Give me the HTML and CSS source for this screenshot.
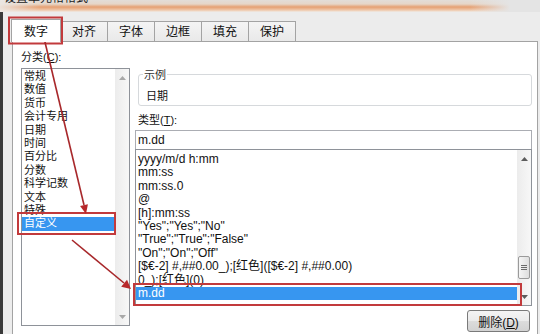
FILE: index.html
```html
<!DOCTYPE html>
<html lang="zh-CN">
<head>
  <meta charset="UTF-8">
  <title>设置单元格格式</title>
  <link rel="stylesheet" href="styles.css">
</head>
<body>

  <div class="dialog">
    <div class="titlebar"><span class="title">设置单元格格式</span></div>

    <div class="tabs">
      <div class="tab active">数字</div>
      <div class="tab">对齐</div>
      <div class="tab">字体</div>
      <div class="tab">边框</div>
      <div class="tab">填充</div>
      <div class="tab">保护</div>
    </div>

    <div class="panel">
      <div class="cat-col">
        <div class="field-label">分类(<u>C</u>):</div>
        <div class="listbox cat-list">
          <ul class="items">
            <li>常规</li>
            <li>数值</li>
            <li>货币</li>
            <li>会计专用</li>
            <li>日期</li>
            <li>时间</li>
            <li>百分比</li>
            <li>分数</li>
            <li>科学记数</li>
            <li>文本</li>
            <li>特殊</li>
            <li class="selected">自定义</li>
          </ul>
          <div class="vscroll disabled">
            <div class="arrow"><svg width="7" height="4" viewBox="0 0 7 4"><polygon points="0,4 3.5,0 7,4"/></svg></div>
            <div class="track"></div>
            <div class="arrow"><svg width="7" height="4" viewBox="0 0 7 4"><polygon points="0,0 3.5,4 7,0"/></svg></div>
          </div>
        </div>
      </div>

      <div class="type-col">
        <div class="sample">
          <div class="legend">示例</div>
          <div class="sample-value">日期</div>
        </div>
        <div class="field-label type-label">类型(<u>T</u>):</div>
        <div class="type-input">m.dd</div>
        <div class="listbox type-list">
          <ul class="items">
            <li>yyyy/m/d h:mm</li>
            <li>mm:ss</li>
            <li>mm:ss.0</li>
            <li>@</li>
            <li>[h]:mm:ss</li>
            <li>"Yes";"Yes";"No"</li>
            <li>"True";"True";"False"</li>
            <li>"On";"On";"Off"</li>
            <li>[$€-2] #,##0.00_);[红色]([$€-2] #,##0.00)</li>
            <li>0_);[红色](0)</li>
            <li class="selected">m.dd</li>
          </ul>
          <div class="vscroll">
            <div class="arrow"><svg width="7" height="4" viewBox="0 0 7 4"><polygon points="0,4 3.5,0 7,4"/></svg></div>
            <div class="track">
              <div class="thumb"><span></span><span></span><span></span></div>
            </div>
            <div class="arrow"><svg width="7" height="4" viewBox="0 0 7 4"><polygon points="0,0 3.5,4 7,0"/></svg></div>
          </div>
        </div>
        <button class="btn">删除(<u>D</u>)</button>
      </div>
    </div>

    <!-- 标注：红框和箭头 -->
    <svg class="notes" width="540" height="334" viewBox="0 0 540 334">
      <g fill="none" stroke="#c23a3c" stroke-width="2">
        <rect x="9" y="17.5" width="53" height="26"/>
        <rect x="18" y="213" width="97" height="21"/>
        <rect x="134" y="284" width="387" height="21"/>
      </g>
      <g stroke="#a8282b" stroke-width="1.6" fill="#b8282b">
        <line x1="44" y1="38" x2="84" y2="205"/>
        <polygon points="86,214 87.9,204.3 80.1,206.1" stroke="none"/>
        <line x1="72" y1="240" x2="124" y2="283"/>
        <polygon points="131,289 127,279.8 121.2,286.7" stroke="none"/>
      </g>
    </svg>
  </div>

</body>
</html>
```

FILE: styles.css
```css
* {
  box-sizing: border-box;
}

body {
  margin: 0;
  width: 540px;
  height: 334px;
  overflow: hidden;
  font-family: "Liberation Sans", "Noto Sans CJK SC", sans-serif;
  font-size: 12px;
  color: #111;
  background: linear-gradient(to right, #3a3a3a 0, #3a3a3a 3px, #ececec 3px);
}

.dialog {
  position: relative;
  width: 540px;
  height: 334px;
  overflow: hidden;
}

.titlebar {
  height: 12px;
  overflow: hidden;
  padding-left: 4px;
  background:
    linear-gradient(to right, rgba(236,232,228,0.9) 0, rgba(236,232,228,0) 40px, rgba(236,232,228,0) 470px, #e4e4e4 510px),
    linear-gradient(to bottom, #e2ddd8 0, #e6d6c8 4px, #e5a072 7px, #efc6a8 10px, #efebe7 12px);
}

.title {
  display: block;
  margin-top: -9px;
  line-height: 14px;
  color: #222;
}

.tabs {
  display: flex;
  align-items: flex-end;
  height: 29px;
  padding-left: 12px;
}

.tab {
  width: 48px;
  height: 20px;
  margin-left: -1px;
  border: 1px solid #a3a3a3;
  border-bottom: none;
  background: linear-gradient(#f4f4f4, #e9e9e9);
  text-align: center;
  line-height: 20px;
  font-size: 12px;
}

.tab.active {
  position: relative;
  z-index: 1;
  width: 50px;
  height: 23px;
  margin-bottom: -1px;
  padding-top: 2px;
  background: #fff;
}

.panel {
  display: flex;
  gap: 5px;
  margin-left: 12px;
  width: 526px;
  height: 300px;
  padding: 8px 5px 0 8px;
  background: #fff;
  border: 1px solid #a3a3a3;
}

.field-label {
  height: 14px;
  line-height: 14px;
  font-size: 11px;
}

.cat-col {
  width: 109px;
  display: flex;
  flex-direction: column;
}

.listbox {
  display: flex;
  border: 1px solid #8e9299;
  background: #fff;
}

.cat-list {
  margin-top: 4px;
  height: 258px;
}

.items {
  flex: 1;
  margin: 0;
  padding: 1px 0 0;
  list-style: none;
  overflow: hidden;
}

.items li {
  height: 13.4px;
  line-height: 13.4px;
  padding-left: 2px;
  white-space: nowrap;
}

.cat-list .items li {
  font-size: 11px;
}

.items li.selected {
  background: #3796f0;
  color: #fff;
}

.vscroll {
  width: 14px;
  display: flex;
  flex-direction: column;
  background: linear-gradient(to right, #ececec, #f7f7f7);
}

.arrow {
  height: 17px;
  display: flex;
  align-items: center;
  justify-content: center;
}

.arrow svg {
  fill: #5c5c5c;
}

.vscroll.disabled .arrow svg {
  fill: #a8a8a8;
}

.track {
  flex: 1;
}

.thumb {
  margin: 89px 0 0 1px;
  width: 12px;
  height: 23px;
  border: 1px solid #9a9a9a;
  border-radius: 2px;
  background: linear-gradient(to right, #f5f5f5, #dedede);
  display: flex;
  flex-direction: column;
  align-items: center;
  justify-content: center;
  gap: 1px;
}

.thumb span {
  width: 6px;
  height: 1px;
  background: #6a6a6a;
}

.type-col {
  flex: 1;
  display: flex;
  flex-direction: column;
}

.sample {
  margin: 24px 0 0 3px;
  height: 32px;
  padding: 0 5px;
  border: 1px solid #d6d9dc;
  border-radius: 3px;
}

.legend {
  width: fit-content;
  margin: -7px 0 0 -1px;
  padding: 0 1px;
  line-height: 14px;
  font-size: 11px;
  color: #333;
  background: #fff;
}

.sample-value {
  margin-top: 7px;
  padding-left: 2px;
  line-height: 14px;
  font-size: 11px;
}

.type-label {
  margin: 7px 0 0 3px;
}

.type-input {
  margin-top: 3px;
  height: 20px;
  padding-left: 2px;
  line-height: 18px;
  border: 1px solid #abadb3;
}

.type-list {
  margin-top: -1px;
  height: 157px;
}

.type-list .items {
  padding-top: 3px;
}

.btn {
  align-self: flex-end;
  margin: 4px 2px 0 0;
  width: 63px;
  height: 22px;
  padding: 0;
  border: 1px solid #7a7a7a;
  border-radius: 3px;
  background: linear-gradient(#f4f4f4 0, #ebebeb 50%, #dcdcdc 51%, #d2d2d2 100%);
  font-family: "Liberation Sans", "Noto Sans CJK SC", sans-serif;
  font-size: 12px;
  color: #111;
}

.notes {
  position: absolute;
  top: 0;
  left: 0;
  pointer-events: none;
}
```
